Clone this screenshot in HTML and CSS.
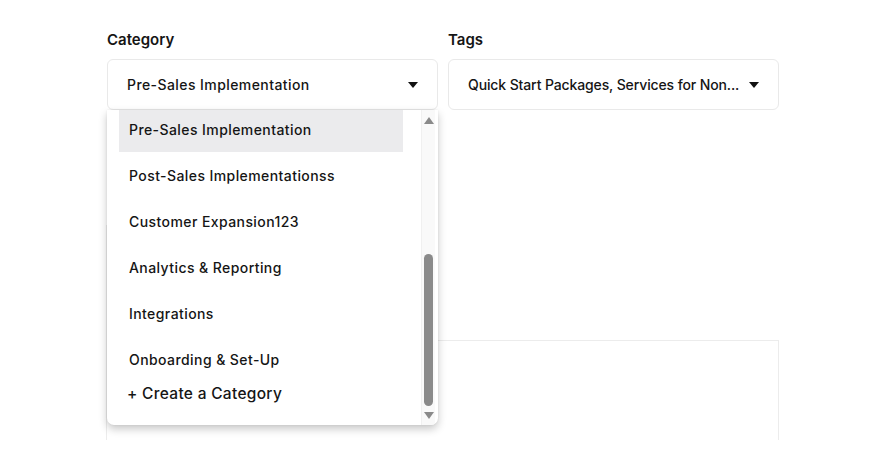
FILE: index.html
```html
<!DOCTYPE html>
<html>
<head>
<meta charset="utf-8">
<link rel="stylesheet" href="styles.css">
</head>
<body>
<div class="page">
  <div class="fields">
    <div class="field">
      <div class="label">Category</div>
      <div class="select-wrap">
        <div class="select">
          <span class="value">Pre-Sales Implementation</span>
          <span class="caret"></span>
        </div>
        <div class="menu">
          <div class="list">
            <div class="options">
              <div class="opt active">Pre-Sales Implementation</div>
              <div class="opt">Post-Sales Implementationss</div>
              <div class="opt">Customer Expansion123</div>
              <div class="opt">Analytics &amp; Reporting</div>
              <div class="opt">Integrations</div>
              <div class="opt">Onboarding &amp; Set-Up</div>
            </div>
            <div class="create">+ Create a Category</div>
          </div>
          <div class="scrollbar">
            <span class="arrow up"></span>
            <span class="track"><span class="thumb"></span></span>
            <span class="arrow down"></span>
          </div>
        </div>
      </div>
    </div>
    <div class="field">
      <div class="label">Tags</div>
      <div class="select">
        <span class="value tags">Quick Start Packages, Services for Non...</span>
        <span class="caret"></span>
      </div>
    </div>
  </div>
  <div class="bg-area">
    <div class="bg-left"></div>
    <div class="bg-card"></div>
  </div>
</div>
</body>
</html>
```

FILE: styles.css
```css
* { box-sizing: border-box; }
html, body { margin: 0; padding: 0; background: #fff; }
body {
  font-family: "Inter", "Noto Sans", sans-serif;
  color: #151515;
  width: 888px;
  height: 468px;
  overflow: hidden;
}
.page { padding: 31px 0 0 107px; }
.fields {
  display: grid;
  grid-template-columns: 331px 331px;
  column-gap: 10px;
}
.label {
  font-size: 15px;
  font-weight: 600;
  line-height: 18px;
  height: 28px;
}
.select-wrap { position: relative; }
.select {
  height: 51px;
  border: 1px solid #e9e9e9;
  border-radius: 6px;
  display: flex;
  align-items: center;
  justify-content: space-between;
  padding: 0 19px 0 19px;
  font-size: 14px;
  font-weight: 500;
  letter-spacing: 0.42px;
}
.value.tags { letter-spacing: -0.12px; }
.caret {
  width: 0; height: 0;
  border-left: 5.5px solid transparent;
  border-right: 5.5px solid transparent;
  border-top: 6px solid #111;
}
.menu {
  position: absolute;
  left: 0;
  top: 51px;
  width: 331px;
  height: 315px;
  background: #fff;
  border-radius: 0 0 7px 7px;
  box-shadow: 0 4px 9px rgba(0,0,0,0.22), 0 0 2px rgba(0,0,0,0.08);
  display: flex;
  overflow: hidden;
  z-index: 2;
}
.list {
  width: 284px;
  flex: none;
  margin-left: 12px;
  overflow: hidden;
}
.options { margin-top: -4px; }
.opt {
  height: 46px;
  display: flex;
  align-items: center;
  padding-left: 10px;
  font-size: 14px;
  font-weight: 500;
  letter-spacing: 0.42px;
  white-space: nowrap;
}
.opt.active { background: #ebebed; }
.create {
  height: 22px;
  display: flex;
  align-items: center;
  padding-left: 8px;
  font-size: 15.5px;
  font-weight: 500;
  letter-spacing: 0.3px;
}
.scrollbar {
  flex: none;
  margin-left: 18px;
  width: 14px;
  height: 315px;
  background: #f9f9f9;
  border-left: 1px solid #f0f0f0;
  display: flex;
  flex-direction: column;
  align-items: center;
  padding: 7px 0 6px;
}
.arrow {
  width: 0; height: 0;
  border-left: 5px solid transparent;
  border-right: 5px solid transparent;
}
.arrow.up { border-bottom: 7px solid #8a8a8a; }
.arrow.down { border-top: 7px solid #8a8a8a; }
.track {
  flex: 1;
  display: flex;
  flex-direction: column;
  justify-content: flex-end;
  padding: 0 0 6px;
  width: 100%;
  align-items: center;
}
.thumb {
  width: 9px;
  height: 152px;
  background: #8a8a8a;
  border-radius: 5px;
}
.bg-area {
  position: relative;
  height: 330px;
}
.bg-left {
  position: absolute;
  left: -1px;
  top: 115px;
  width: 1px;
  height: 215px;
  background: #ececec;
}
.bg-card {
  position: absolute;
  left: 0;
  top: 230px;
  width: 672px;
  height: 100px;
  border-top: 1px solid #ececec;
  border-right: 1px solid #ececec;
}
```
